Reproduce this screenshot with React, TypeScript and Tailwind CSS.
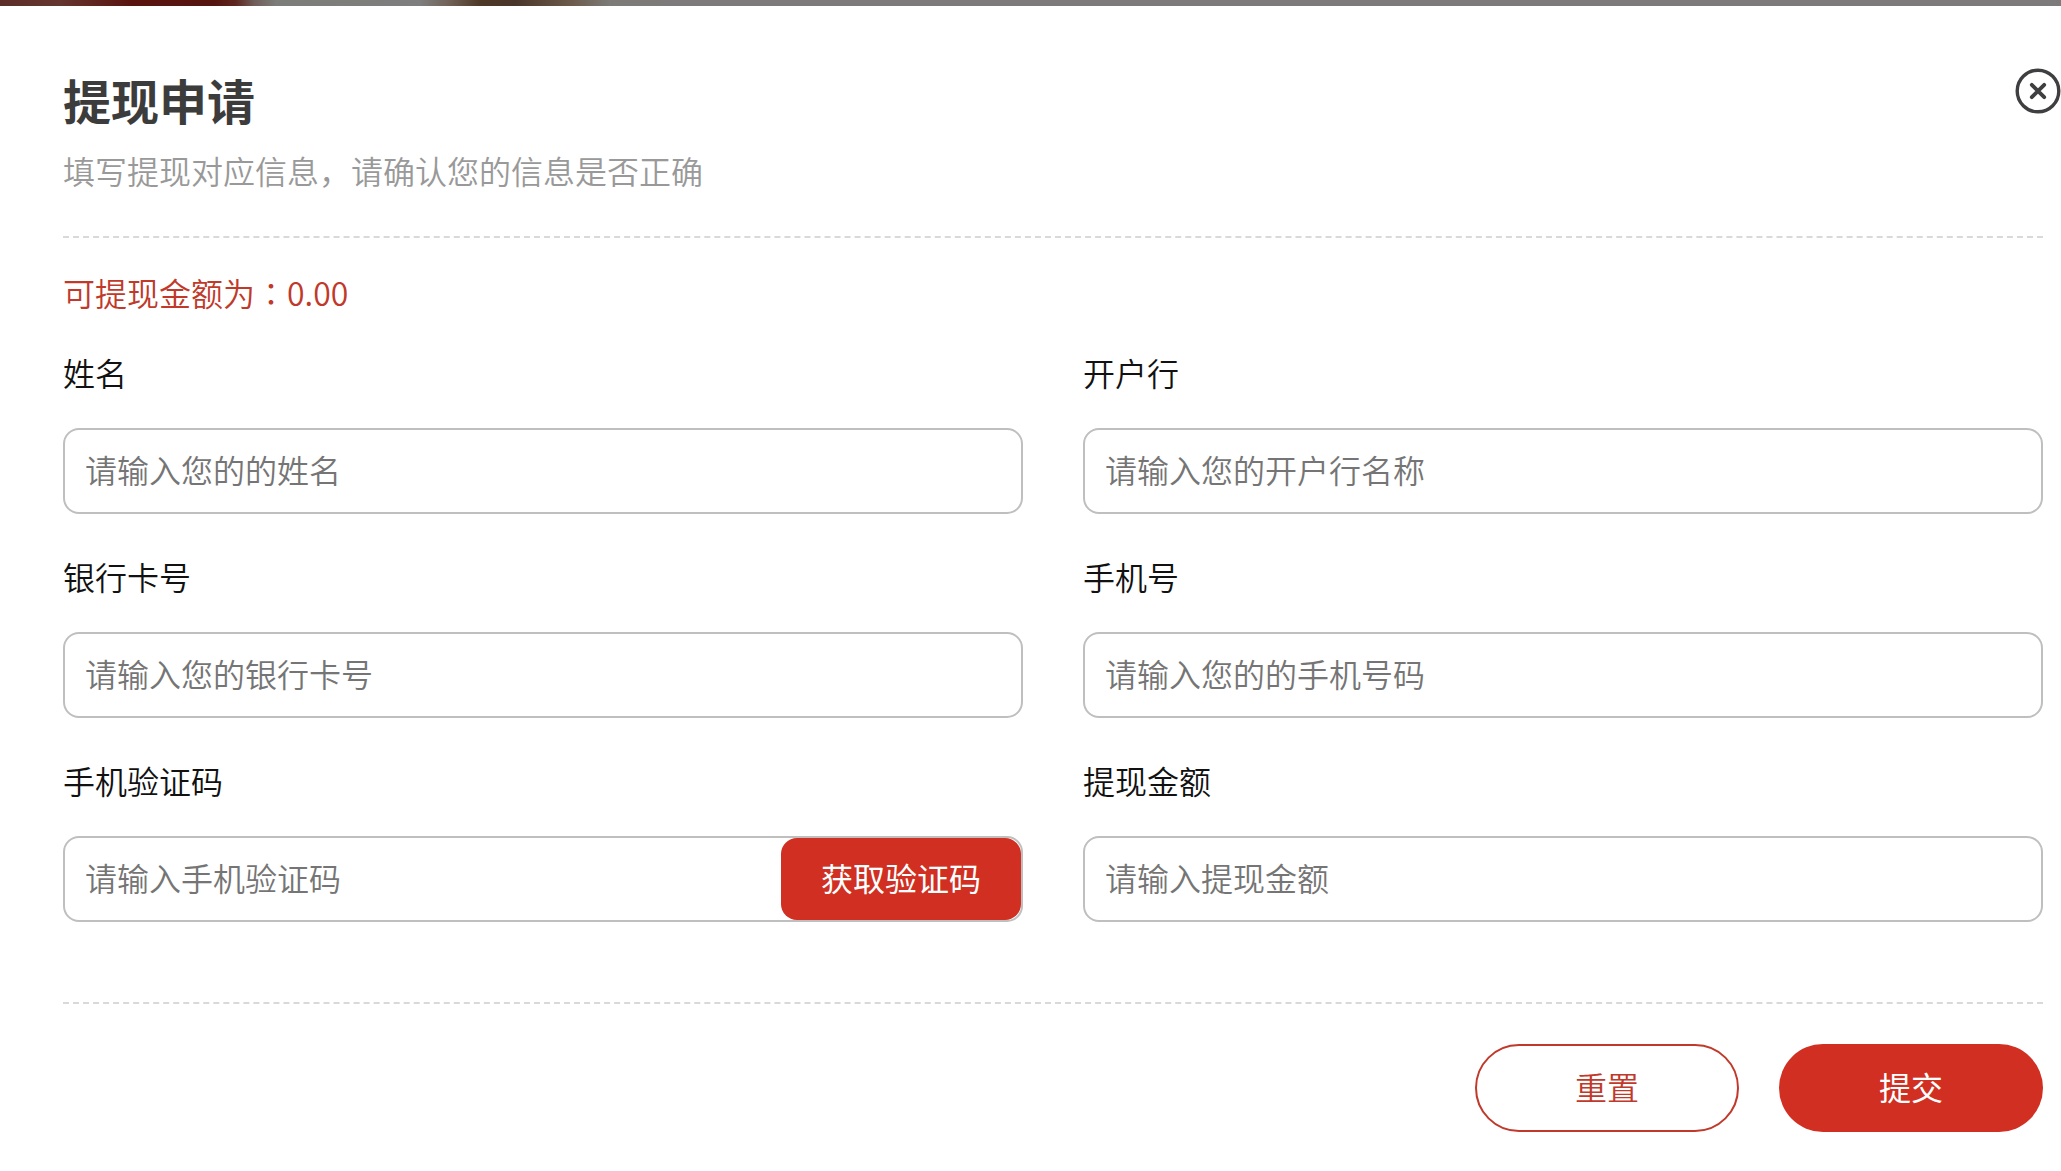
import { useState } from "react"
import type { FormEvent } from "react"
import clsx from "clsx"

interface Field {
  id: string
  label: string
  placeholder: string
  type: string
  hasCode?: boolean
}

const fields: Field[] = [
  { id: "name", label: "姓名", placeholder: "请输入您的的姓名", type: "text" },
  { id: "bank", label: "开户行", placeholder: "请输入您的开户行名称", type: "text" },
  { id: "card", label: "银行卡号", placeholder: "请输入您的银行卡号", type: "text" },
  { id: "phone", label: "手机号", placeholder: "请输入您的的手机号码", type: "tel" },
  { id: "code", label: "手机验证码", placeholder: "请输入手机验证码", type: "text", hasCode: true },
  { id: "amount", label: "提现金额", placeholder: "请输入提现金额", type: "text" },
]

function CloseIcon() {
  return (
    <svg viewBox="0 0 46 46" className="size-[46px]" fill="none" stroke="#3f3f41" aria-hidden="true">
      <circle cx="23" cy="23" r="20.8" strokeWidth="3.4" />
      <path d="M16.8 16.8 29.2 29.2M29.2 16.8 16.8 29.2" strokeWidth="3.8" strokeLinecap="round" />
    </svg>
  )
}

function FormField({
  field,
  value,
  onChange,
}: {
  field: Field
  value: string
  onChange: (value: string) => void
}) {
  return (
    <div className="flex flex-col gap-[34px]">
      <label htmlFor={field.id} className="text-[32px] leading-[44px] text-[#111]">
        {field.label}
      </label>
      <div className="flex h-[86px] rounded-2xl border-2 border-[#bfbfbf]">
        <input
          id={field.id}
          type={field.type}
          value={value}
          placeholder={field.placeholder}
          onChange={(e) => onChange(e.target.value)}
          className="min-w-0 flex-1 rounded-2xl px-5 pb-1 text-[32px] placeholder:text-[#757575] focus:outline-none"
        />
        {field.hasCode && (
          <button
            type="button"
            className="w-60 shrink-0 cursor-pointer rounded-2xl bg-[#d02f21] pb-1 text-[32px] font-normal text-white"
          >
            获取验证码
          </button>
        )}
      </div>
    </div>
  )
}

export default function App() {
  const [values, setValues] = useState<Record<string, string>>({})
  const [open, setOpen] = useState(true)

  const handleSubmit = (e: FormEvent) => {
    e.preventDefault()
  }

  return (
    <div className="min-h-screen bg-white font-['Noto_Sans_CJK_SC',sans-serif] font-[350]">
      {/* dimmed page showing above the dialog */}
      <div className="h-1.5 bg-[linear-gradient(90deg,#5c2c28_0px,#653530_60px,#5a1410_130px,#551410_215px,#5e2620_236px,#6f5d58_254px,#7c7c7a_276px,#7e7e7e_420px,#6f6055_450px,#4e3826_480px,#49362a_515px,#6b594a_570px,#7c7b78_610px,#7c7a7b_700px,#7c7a7b_100%)]" />

      <div
        role="dialog"
        aria-labelledby="withdraw-title"
        className={clsx("pt-[57px] pr-[18px] pb-8 pl-[63px]", !open && "hidden")}
      >
        <header className="flex items-start justify-between border-b-2 border-dashed border-[#d9d9d9] pb-[43px]">
          <div className="flex flex-col gap-3">
            <h1 id="withdraw-title" className="text-5xl leading-[72px] font-bold text-[#3c3c3c]">
              提现申请
            </h1>
            <p className="text-[32px] leading-[46px] text-[#999]">
              填写提现对应信息，请确认您的信息是否正确
            </p>
          </div>
          <button
            type="button"
            aria-label="关闭"
            onClick={() => setOpen(false)}
            className="mt-[5px] -mr-[18px] cursor-pointer"
          >
            <CloseIcon />
          </button>
        </header>

        <form onSubmit={handleSubmit} onReset={() => setValues({})}>
          <p className="pt-[31px] text-[32px] leading-[46px] text-[#c0392b]">
            可提现金额为<span className="font-['Noto_Sans_CJK_TC',sans-serif]">：</span>0.00
          </p>

          <div className="grid grid-cols-2 gap-x-[60px] gap-y-10 pt-[35px]">
            {fields.map((field) => (
              <FormField
                key={field.id}
                field={field}
                value={values[field.id] ?? ""}
                onChange={(value) => setValues((prev) => ({ ...prev, [field.id]: value }))}
              />
            ))}
          </div>

          <div className="mt-20 flex justify-end gap-10 border-t-2 border-dashed border-[#d9d9d9] pt-10">
            <button
              type="reset"
              className="h-[88px] w-[264px] cursor-pointer rounded-full border-2 border-[#c0392b] pb-1 text-[32px] text-[#c0392b]"
            >
              重置
            </button>
            <button
              type="submit"
              className="h-[88px] w-[264px] cursor-pointer rounded-full bg-[#d02f21] pb-1 text-[32px] font-normal text-white"
            >
              提交
            </button>
          </div>
        </form>
      </div>
    </div>
  )
}
